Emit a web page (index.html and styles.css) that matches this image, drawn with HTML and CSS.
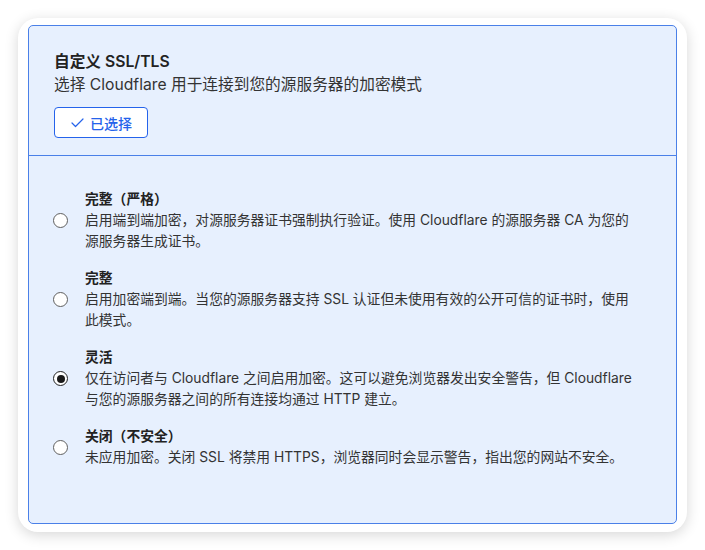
FILE: index.html
```html
<!DOCTYPE html>
<html lang="zh-CN">
<head>
  <meta charset="UTF-8" />
  <meta name="viewport" content="width=device-width, initial-scale=1.0"/>
  <title>自定义 SSL/TLS</title>
  <link rel="stylesheet" href="styles.css">
</head>
<body>
  <div class="card">
    <div class="panel">

      <!-- Header -->
      <div class="panel-head">
        <h2>自定义 SSL/TLS</h2>
        <p class="subtitle">选择 Cloudflare 用于连接到您的源服务器的加密模式</p>
        <button class="selected-btn">
          <svg width="13" height="10" viewBox="0 0 13 10" fill="none">
            <polyline points="1,5 4.5,8.5 12,1" stroke="#2563eb" stroke-width="1.2" stroke-linejoin="round" stroke-linecap="round"/>
          </svg>
          已选择
        </button>
      </div>

      <!-- Mode options -->
      <div class="options">
        <label class="option">
          <input type="radio" name="mode" />
          <span class="option-text">
            <strong>完整（严格）</strong>
            <span class="desc">启用端到端加密，对源服务器证书强制执行验证。使用 Cloudflare 的源服务器 CA 为您的源服务器生成证书。</span>
          </span>
        </label>
        <label class="option">
          <input type="radio" name="mode" />
          <span class="option-text">
            <strong>完整</strong>
            <span class="desc">启用加密端到端。当您的源服务器支持 SSL 认证但未使用有效的公开可信的证书时，使用此模式。</span>
          </span>
        </label>
        <label class="option">
          <input type="radio" name="mode" checked />
          <span class="option-text">
            <strong>灵活</strong>
            <span class="desc">仅在访问者与 Cloudflare 之间启用加密。这可以避免浏览器发出安全警告，但 Cloudflare 与您的源服务器之间的所有连接均通过 HTTP 建立。</span>
          </span>
        </label>
        <label class="option">
          <input type="radio" name="mode" />
          <span class="option-text">
            <strong>关闭（不安全）</strong>
            <span class="desc">未应用加密。关闭 SSL 将禁用 HTTPS，浏览器同时会显示警告，指出您的网站不安全。</span>
          </span>
        </label>
      </div>

    </div>
  </div>
</body>
</html>
```

FILE: styles.css
```css
/* —— Reset & Base —— */
* { box-sizing: border-box; margin: 0; padding: 0; }
body {
  font-family: Inter, "Noto Sans CJK SC", sans-serif;
  background: #fff;
  color: #2b2b2b;
  padding: 18px;
}

/* —— Outer card —— */
.card {
  height: 514px;
  background: #fff;
  border-radius: 20px;
  padding: 7px 10px 8px 10px;
  box-shadow: 0 3px 14px rgba(0,0,0,0.16);
}

/* —— Blue panel —— */
.panel {
  height: 100%;
  background: #e7f0fe;
  border: 1px solid #4a80e8;
  border-radius: 5px;
}

.panel-head {
  padding: 25px 25px 17px;
  border-bottom: 1px solid #4a80e8;
}
.panel-head h2 {
  font-size: 15.7px;
  font-weight: 600;
  line-height: 22px;
  color: #222;
}
.subtitle {
  font-size: 15.7px;
  line-height: 24px;
  color: #333;
  margin-bottom: 10px;
}
.selected-btn {
  display: flex;
  align-items: center;
  gap: 6px;
  height: 31px;
  padding: 0 15px 0 16px;
  background: #fff;
  border: 1px solid #2563eb;
  border-radius: 4px;
  color: #2563eb;
  font-family: inherit;
  font-size: 14px;
  font-weight: 500;
}

/* —— Options —— */
.options {
  padding: 33px 24px 24px;
  display: flex;
  flex-direction: column;
  gap: 16px;
}
.option {
  display: flex;
  align-items: center;
  gap: 17px;
}
.option input {
  appearance: none;
  flex: none;
  width: 15px;
  height: 15px;
  border: 1.3px solid #5f5f5f;
  border-radius: 50%;
  background: #fff;
  display: grid;
  place-items: center;
}
.option input:checked { border-color: #222; }
.option input:checked::after {
  content: "";
  width: 8px;
  height: 8px;
  border-radius: 50%;
  background: #1a1a1a;
}
.option-text {
  display: flex;
  flex-direction: column;
  max-width: 556px;
  font-size: 13.8px;
  line-height: 21px;
}
.option-text strong {
  font-weight: 600;
  color: #222;
}
.desc { color: #333; }
```
